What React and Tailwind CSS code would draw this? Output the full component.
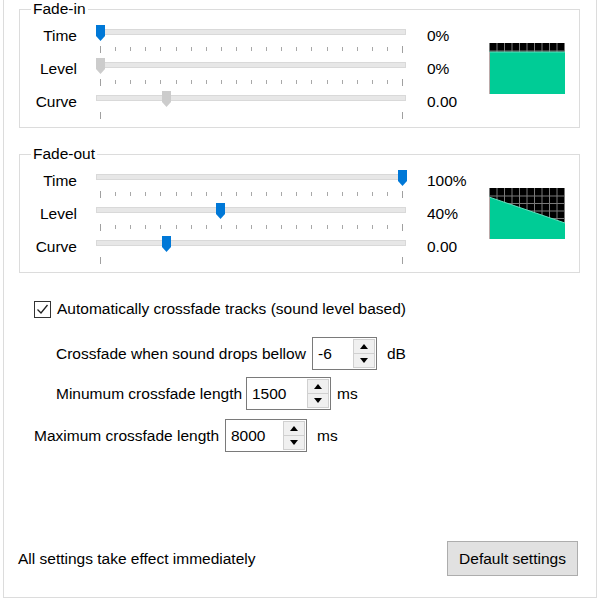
import React from 'react';

// Ticks sit every 15.1px between the first and last thumb centre
const TICK_COUNT = 21;

function Thumb({ active, left }) {
  return (
    <svg className="absolute top-[7px]" style={{ left }} width="9" height="16" viewBox="0 0 9 16">
      <path d="M0 0 H9 V11 L4.5 16 L0 11 Z" fill={active ? '#0078d7' : '#cccccc'} />
    </svg>
  );
}

function Slider({ value, active = true, fullTicks = true }) {
  const ticks = fullTicks ? Array.from({ length: TICK_COUNT }, (_, i) => i) : [0, TICK_COUNT - 1];
  return (
    <div className="relative h-[33px] w-[310px] shrink-0">
      <div className="absolute left-0 right-0 top-[11px] h-[6px] border border-[#d9d9d9] bg-[#e7e7e7]" />
      {ticks.map((i) => {
        const edge = i === 0 || i === TICK_COUNT - 1;
        return (
          <div
            key={i}
            className={edge ? 'absolute top-[28px] h-[7px] w-px bg-[#a0a0a0]' : 'absolute top-[29px] h-[4px] w-px bg-[#a8a8a8]'}
            style={{ left: Math.round(4 + (i * 302) / (TICK_COUNT - 1)) }}
          />
        );
      })}
      <Thumb active={active} left={Math.round(4 + value * 302 - 4.5)} />
    </div>
  );
}

function SliderRow({ label, value, text, active, fullTicks }) {
  return (
    <div className="flex h-[33px] items-start">
      <div className="mt-[9px] w-[57px] text-right leading-[18px]">{label}</div>
      <div className="ml-[19px]">
        <Slider value={value} active={active} fullTicks={fullTicks} />
      </div>
      <div className="ml-[21px] mt-[9px] w-[62px] leading-[18px]">{text}</div>
    </div>
  );
}

function Graph({ points }) {
  const lines = Array.from({ length: 11 }, (_, i) => i * 7.5);
  return (
    <svg width="76" height="51" viewBox="0 0 76 51" className="mt-[25px] shrink-0">
      <rect width="76" height="51" fill="#000" />
      {lines.map((x) => (
        <line key={'v' + x} x1={x + 0.5} y1="0" x2={x + 0.5} y2="51" stroke="#7a7a7a" strokeWidth="1" />
      ))}
      {[7.5, 15, 22.5, 30, 37.5, 45].map((y) => (
        <line key={'h' + y} x1="0" y1={y + 0.5} x2="76" y2={y + 0.5} stroke="#7a7a7a" strokeWidth="1" />
      ))}
      <polygon points={points} fill="#00cc96" />
      <polyline points={points.split(' ').slice(0, 2).join(' ')} fill="none" stroke="#5fe0bd" strokeWidth="1" />
      <line x1="0.5" y1="9" x2="0.5" y2="51" stroke="#bba9a9" strokeWidth="1" />
    </svg>
  );
}

function FadeGroup({ title, rows, points }) {
  return (
    <fieldset className="ml-[15px] h-[128px] w-[561px] border border-[#dcdcdc]">
      <legend className="ml-[11px] px-[2px] leading-[18px]">{title}</legend>
      <div className="flex">
        <div className="flex flex-col">
          {rows.map((r) => (
            <SliderRow key={r.label} {...r} />
          ))}
        </div>
        <Graph points={points} />
      </div>
    </fieldset>
  );
}

function Spin({ value, className }) {
  return (
    <div className={'flex h-[33px] shrink-0 border border-[#7a7a7a] bg-white ' + className}>
      <div className="flex-1 pl-[5px] leading-[31px]">{value}</div>
      <div className="my-px mr-px flex w-[22px] flex-col border border-[#d0d0d0] bg-[#f0f0f0]">
        <div className="flex flex-1 items-center justify-center border-b border-[#d0d0d0]">
          <svg width="8" height="5" viewBox="0 0 8 5">
            <path d="M0 5 L4 0 L8 5 Z" fill="#000" />
          </svg>
        </div>
        <div className="flex flex-1 items-center justify-center">
          <svg width="8" height="5" viewBox="0 0 8 5">
            <path d="M0 0 L8 0 L4 5 Z" fill="#000" />
          </svg>
        </div>
      </div>
    </div>
  );
}

export default function App() {
  return (
    <div className="h-[600px] w-[600px] overflow-hidden whitespace-nowrap bg-white font-['Liberation_Sans',Arial,sans-serif] text-[15.5px] text-black">
      <div className="ml-[3px] flex h-[598px] w-[594px] flex-col border-x border-b border-[#dcdcdc]">
        <FadeGroup
          title="Fade-in"
          points="0,9 76,9 76,51 0,51"
          rows={[
            { label: 'Time', value: 0, text: '0%', active: true, fullTicks: true },
            { label: 'Level', value: 0, text: '0%', active: false, fullTicks: true },
            { label: 'Curve', value: 0.22, text: '0.00', active: false, fullTicks: false },
          ]}
        />
        <div className="mt-[17px]">
          <FadeGroup
            title="Fade-out"
            points="0,9 76,35 76,51 0,51"
            rows={[
              { label: 'Time', value: 1, text: '100%', active: true, fullTicks: true },
              { label: 'Level', value: 0.4, text: '40%', active: true, fullTicks: true },
              { label: 'Curve', value: 0.22, text: '0.00', active: true, fullTicks: false },
            ]}
          />
        </div>

        {/* Crossfade options */}
        <label className="ml-[30px] mt-[27px] flex h-[18px] items-center gap-[6px] leading-[18px]">
          <svg width="17" height="17" viewBox="0 0 17 17" className="shrink-0">
            <rect x="0.5" y="0.5" width="16" height="16" fill="#fff" stroke="#333" />
            <path d="M3.5 8.5 L7 12 L13.5 4" fill="none" stroke="#222" strokeWidth="1.3" />
          </svg>
          Automatically crossfade tracks (sound level based)
        </label>

        <div className="ml-[52px] mt-[19px] flex items-center">
          <div className="w-[256px]">Crossfade when sound drops bellow</div>
          <Spin value="-6" className="w-[65px]" />
          <div className="ml-[10px]">dB</div>
        </div>
        <div className="ml-[52px] mt-[7px] flex items-center">
          <div className="w-[190px]">Minumum crossfade length</div>
          <Spin value="1500" className="w-[85px]" />
          <div className="ml-[6px]">ms</div>
        </div>
        <div className="ml-[30px] mt-[9px] flex items-center">
          <div className="w-[191px]">Maximum crossfade length</div>
          <Spin value="8000" className="w-[82px]" />
          <div className="ml-[10px]">ms</div>
        </div>

        <div className="mb-[21px] ml-[14px] mr-[18px] mt-auto flex items-center justify-between">
          <div>All settings take effect immediately</div>
          <button className="h-[35px] w-[131px] border border-[#adadad] bg-[#e1e1e1] text-center">
            Default settings
          </button>
        </div>
      </div>
    </div>
  );
}
